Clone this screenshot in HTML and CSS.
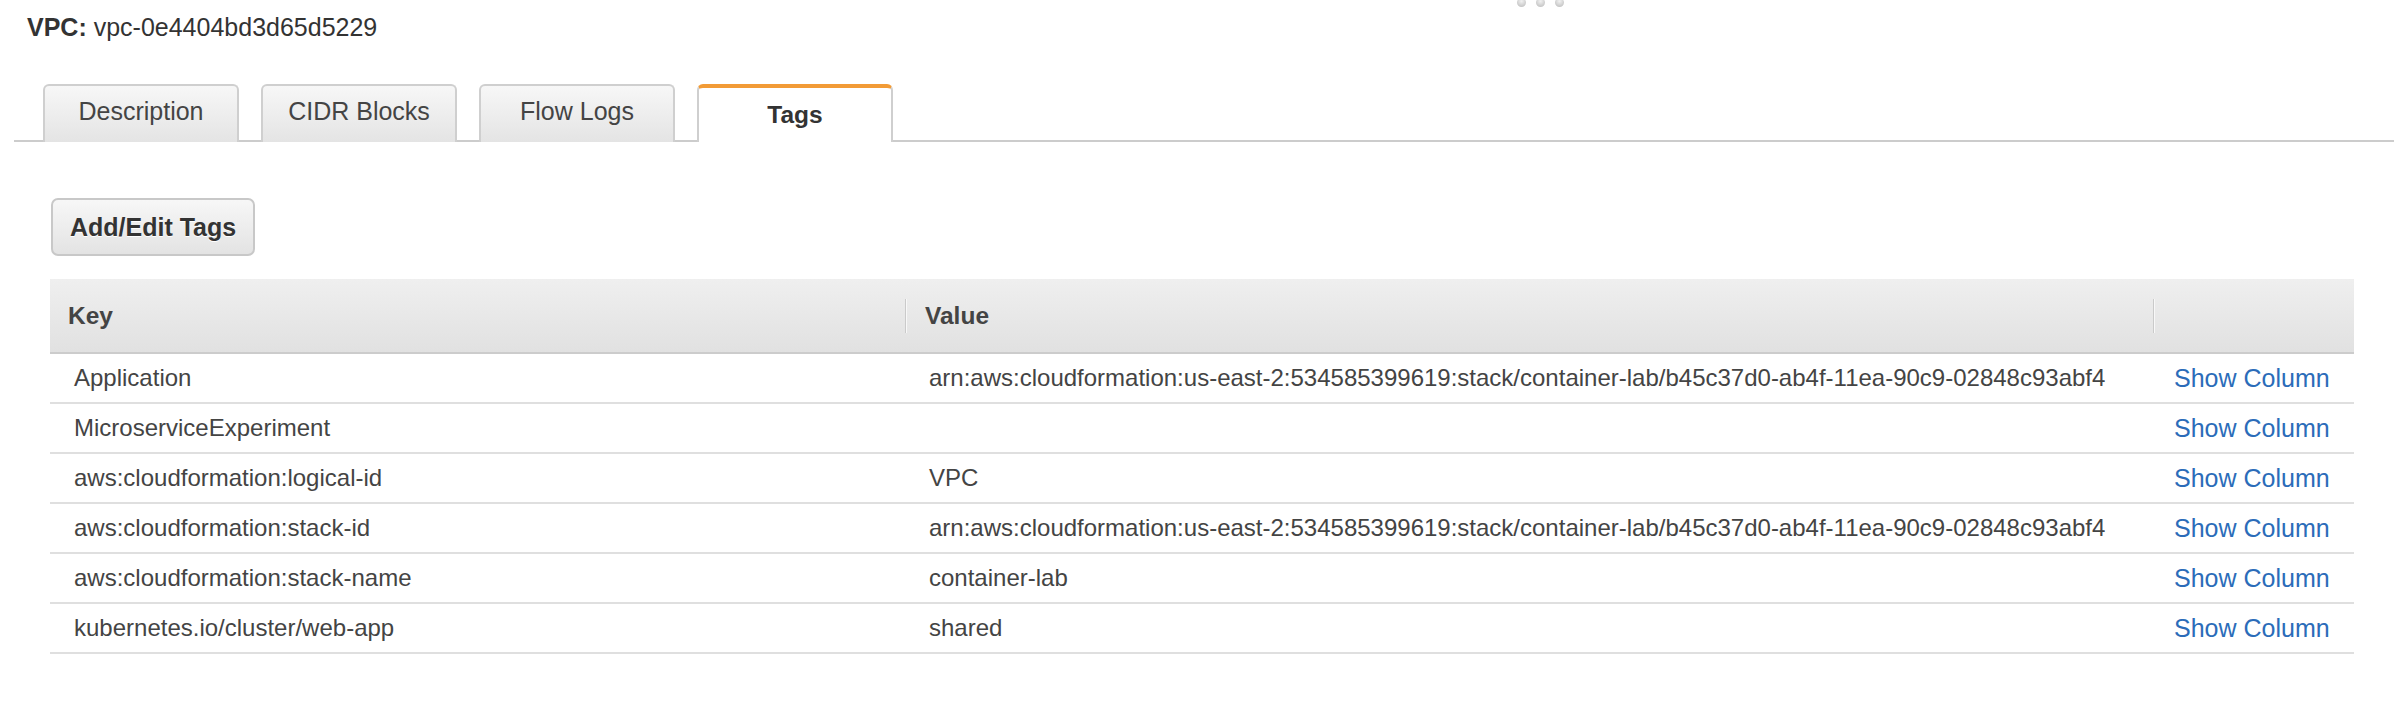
FILE: index.html
```html
<!DOCTYPE html>
<html lang="en">
<head>
<meta charset="utf-8">
<title>VPC Tags</title>
<link rel="stylesheet" href="styles.css">
</head>
<body>
<div class="handle" aria-hidden="true"><span></span><span></span><span></span></div>
<div class="panel">
  <h1 class="title"><b>VPC:</b> vpc-0e4404bd3d65d5229</h1>
  <div class="tabs">
    <div class="tab">Description</div>
    <div class="tab">CIDR Blocks</div>
    <div class="tab">Flow Logs</div>
    <div class="tab active">Tags</div>
  </div>
  <div class="content">
    <button class="btn">Add/Edit Tags</button>
    <table class="tags">
      <colgroup>
        <col class="c-key">
        <col class="c-val">
        <col class="c-act">
      </colgroup>
      <thead>
        <tr><th>Key</th><th class="sep">Value</th><th class="sep"></th></tr>
      </thead>
      <tbody>
        <tr><td>Application</td><td>arn:aws:cloudformation:us-east-2:534585399619:stack/container-lab/b45c37d0-ab4f-11ea-90c9-02848c93abf4</td><td class="act"><a href="#">Show Column</a></td></tr>
        <tr><td>MicroserviceExperiment</td><td></td><td class="act"><a href="#">Show Column</a></td></tr>
        <tr><td>aws:cloudformation:logical-id</td><td>VPC</td><td class="act"><a href="#">Show Column</a></td></tr>
        <tr><td>aws:cloudformation:stack-id</td><td>arn:aws:cloudformation:us-east-2:534585399619:stack/container-lab/b45c37d0-ab4f-11ea-90c9-02848c93abf4</td><td class="act"><a href="#">Show Column</a></td></tr>
        <tr><td>aws:cloudformation:stack-name</td><td>container-lab</td><td class="act"><a href="#">Show Column</a></td></tr>
        <tr><td>kubernetes.io/cluster/web-app</td><td>shared</td><td class="act"><a href="#">Show Column</a></td></tr>
      </tbody>
    </table>
  </div>
</div>
</body>
</html>
```
FILE: styles.css
```css
html, body {
  margin: 0;
  padding: 0;
  background: #ffffff;
}

body {
  font-family: "Liberation Sans", Arial, Helvetica, sans-serif;
  color: #444444;
  position: relative;
  min-height: 708px;
}

.handle {
  position: absolute;
  top: -2px;
  left: 1517px;
  display: flex;
  gap: 10px;
}

.handle span {
  width: 9px;
  height: 9px;
  border-radius: 50%;
  background: radial-gradient(circle at 50% 35%, #f2f2f2 0%, #d2d2d2 55%, #b9b9b9 100%);
}

.panel {
  margin-left: 14px;
}

.title {
  margin: 12px 0 0 13px;
  font-size: 25px;
  line-height: 30px;
  font-weight: normal;
  color: #333333;
}

.title b {
  font-weight: bold;
}

.tabs {
  margin-top: 42px;
  display: flex;
  gap: 22px;
  padding-left: 29px;
  border-bottom: 2px solid #cccccc;
  height: 56px;
}

.tab {
  box-sizing: border-box;
  width: 196px;
  height: 58px;
  border: 2px solid #cfcfcf;
  border-bottom: 0;
  border-radius: 6px 6px 0 0;
  background: linear-gradient(#f7f7f7, #e4e4e4);
  display: flex;
  align-items: center;
  justify-content: center;
  padding-bottom: 6px;
  font-size: 25px;
  color: #444444;
}

.tab.active {
  background: #ffffff;
  border-top: 4px solid #f29b36;
  border-left: 2px solid #cfcfcf;
  border-right: 2px solid #cfcfcf;
  font-weight: bold;
  font-size: 24.5px;
  color: #333333;
  padding-bottom: 0;
  position: relative;
  z-index: 1;
}

.content {
  padding: 56px 40px 0 36px;
}

.btn {
  display: block;
  margin-left: 1px;
  height: 58px;
  padding: 0 17px;
  border: 2px solid #c8c8c8;
  border-radius: 7px;
  background: linear-gradient(#f7f7f7, #e3e3e3);
  font-family: "Liberation Sans", Arial, Helvetica, sans-serif;
  font-size: 25px;
  font-weight: bold;
  color: #333333;
  text-shadow: 0 1px 0 #ffffff;
}

.tags {
  margin-top: 23px;
  width: 2304px;
  border-collapse: collapse;
  table-layout: fixed;
}

.c-key { width: 855px; }
.c-val { width: 1248px; }
.c-act { width: 201px; }

.tags th {
  height: 73px;
  padding: 0 0 0 18px;
  text-align: left;
  font-size: 24.5px;
  font-weight: bold;
  color: #444444;
  background: linear-gradient(#efefef, #e1e1e1);
  border-bottom: 2px solid #cccccc;
}

.tags th.sep {
  position: relative;
  padding-left: 20px;
}

.tags th.sep::before {
  content: "";
  position: absolute;
  left: 0;
  top: 20px;
  width: 1px;
  height: 34px;
  background: #cacaca;
  box-shadow: 1px 0 0 #f8f8f8;
}

.tags td {
  height: 48px;
  padding: 0 0 0 24px;
  font-size: 24px;
  color: #444444;
  border-bottom: 2px solid #dfdfdf;
  white-space: nowrap;
}

.tags td.act {
  padding-left: 21px;
}

.tags a {
  color: #2b6cb9;
  text-decoration: none;
  font-size: 25px;
}
```
